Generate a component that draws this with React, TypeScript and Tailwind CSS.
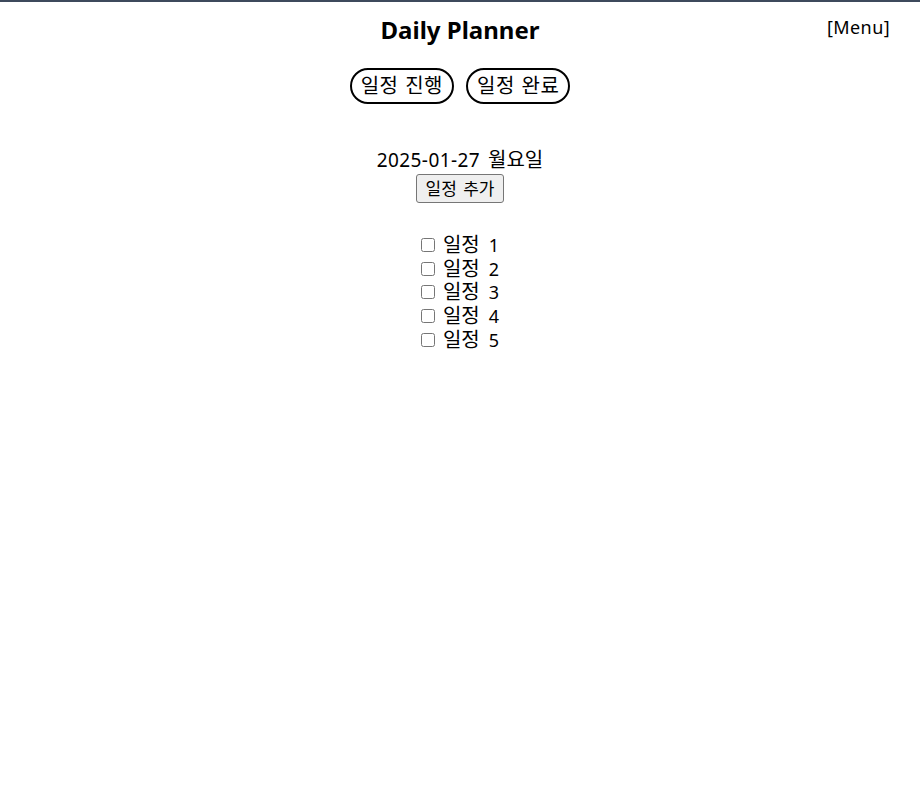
export default function App() {
  const items = [1, 2, 3, 4, 5];

  return (
    <div
      className="min-h-screen bg-white text-black border-t-2 border-[#3d4a5c]"
      style={{ fontFamily: '"Noto Sans", "Noto Sans CJK KR", sans-serif' }}
    >
      <header className="relative flex justify-center pt-[12px]">
        <h1 className="text-[24px] font-bold leading-[32px]">Daily Planner</h1>
        <span className="absolute right-[30px] top-[11px] text-[18px] leading-[28px] tracking-[0.4px]">[Menu]</span>
      </header>

      <nav className="flex justify-center gap-[12px] mt-[22px]">
        <button className="h-[36px] px-[9px] rounded-full border-2 border-black text-[20px] leading-none tracking-[0.5px] [word-spacing:1px]">
          일정 진행
        </button>
        <button className="h-[36px] px-[9px] rounded-full border-2 border-black text-[20px] leading-none tracking-[0.5px] [word-spacing:1px]">
          일정 완료
        </button>
      </nav>

      <section className="flex flex-col items-center mt-[44px]">
        <div className="h-[24px] text-[19px] leading-[24px] tracking-[0.4px] whitespace-nowrap">
          <span>2025-01-27</span>
          <span className="text-[20px] tracking-normal ml-[8px]">월요일</span>
        </div>
        <button className="mt-[2px] h-[29px] px-[9px] text-[17px] leading-none bg-[#efefef] border border-[#767676] rounded-[3px] [word-spacing:2px]">
          일정 추가
        </button>
      </section>

      <ul className="flex flex-col items-center mt-[30px]">
        {items.map((n) => (
          <li key={n} className="flex items-center gap-[8px] h-[23.75px] text-[18px]">
            <input type="checkbox" className="w-[14px] h-[14px] accent-white" />
            <div className="flex items-center h-[20px] leading-[20px] whitespace-nowrap">
              <span className="inline-block h-[20px] text-[20px] leading-[20px]">일정</span>
              <span className="inline-block h-[20px] leading-[20px] ml-[9px]">{n}</span>
            </div>
          </li>
        ))}
      </ul>
    </div>
  );
}
